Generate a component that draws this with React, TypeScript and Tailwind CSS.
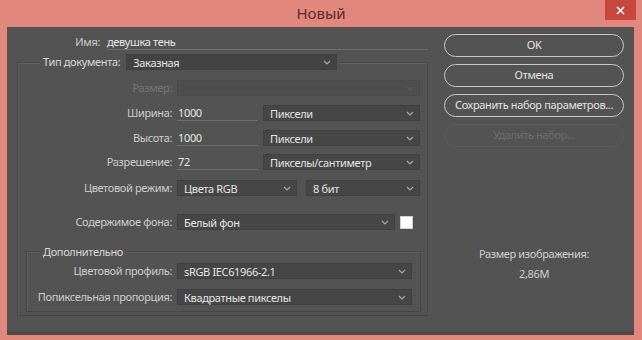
import React from "react";

const font = { fontFamily: '"Noto Sans", "Open Sans", sans-serif' };

function Chevron() {
  return (
    <svg width="8" height="5" viewBox="0 0 8 5" className="shrink-0">
      <path d="M1 1 L4 4 L7 1" fill="none" stroke="#a8a8a8" strokeWidth="1.2" />
    </svg>
  );
}

function Select({ text, className, disabled }: { text: string; className: string; disabled?: boolean }) {
  return (
    <div
      className={
        "flex items-center justify-between pl-[6px] pr-[5px] h-[16px] border " +
        (disabled ? "bg-[#4e4e4e] border-[#4a4a4a] " : "bg-[#464646] border-[#404040] ") +
        className
      }
    >
      <span className="text-[#e4e4e4] leading-none whitespace-nowrap">{text}</span>
      {disabled ? (
        <svg width="8" height="5" viewBox="0 0 8 5">
          <path d="M1 1 L4 4 L7 1" fill="none" stroke="#5c5c5c" strokeWidth="1.2" />
        </svg>
      ) : (
        <Chevron />
      )}
    </div>
  );
}

function Input({ text, className }: { text: string; className: string }) {
  return (
    <div className={"h-[16px] flex items-center border-b border-[#6c6c6c] pl-[1px] " + className}>
      <span className="text-[#e6e6e6] leading-none">{text}</span>
    </div>
  );
}

function Row({ label, children, labelW, className, disabled }: { label: string; children: React.ReactNode; labelW: string; className: string; disabled?: boolean }) {
  return (
    <div className={"flex items-center h-[17px] " + className}>
      <div className={"text-right shrink-0 pr-[5px] whitespace-nowrap " + labelW + (disabled ? " text-[#767676]" : " text-[#cdcdcd]")}>
        {label}
      </div>
      {children}
    </div>
  );
}

function Btn({ text, disabled, className }: { text: string; disabled?: boolean; className?: string }) {
  return (
    <div
      className={
        "w-[180px] h-[23px] rounded-full flex items-center justify-center border-[1.5px] " +
        (disabled ? "border-[#5c5c5c] text-[#6e6e6e] " : "border-[#c9c9c9] text-[#e2e2e2] ") +
        (className || "")
      }
    >
      {text}
    </div>
  );
}

export default function App() {
  return (
    <div className="w-[642px] h-[340px] bg-[#e2877d] flex flex-col text-[11px] tracking-[-0.35px]" style={font}>
      <div className="relative h-[27px] flex items-center justify-center shrink-0">
        <span className="text-[15px] text-[#5a2c29] tracking-normal">Новый</span>
        <div className="absolute right-[6px] top-0 w-[31px] h-[20px] bg-[#c7473f] flex items-center justify-center">
          <svg width="9" height="9" viewBox="0 0 9 9">
            <path d="M1 1 L8 8 M8 1 L1 8" stroke="#fff" strokeWidth="1.6" />
          </svg>
        </div>
      </div>
      <div className="ml-[7px] mr-[8px] mb-[5px] flex-1 bg-[#535353] border-b-[4px] border-[#4b4b4b] flex">
        {/* left column */}
        <div className="w-[425px] flex flex-col">
          <div className="flex items-center h-[16px] mt-[7px]">
            <div className="w-[100px] text-right pr-[7px] text-[#cdcdcd]">Имя:</div>
            <Input text="девушка тень" className="w-[321px] !pl-[0px]" />
          </div>
          <fieldset className="ml-[10px] w-[411px] mt-[4px] border border-[#474747] shadow-[inset_1px_1px_0_#606060] pb-[3px]">
            <legend className="ml-[22px] px-[3px] bg-[#535353] flex items-center">
              <span className="text-[#d8d8d8] mr-[6px]">Тип документа:</span>
              <Select text="Заказная" className="w-[211px] !bg-[#434343]" />
            </legend>
            <div className="flex flex-col">
              <Row label="Размер:" labelW="w-[159px]" className="mt-[9px]" disabled>
                <Select text="" className="w-[243px]" disabled />
              </Row>
              <Row label="Ширина:" labelW="w-[159px]" className="mt-[8px]">
                <Input text="1000" className="w-[81px]" />
                <Select text="Пиксели" className="w-[157px] ml-[5px]" />
              </Row>
              <Row label="Высота:" labelW="w-[159px]" className="mt-[8px]">
                <Input text="1000" className="w-[81px]" />
                <Select text="Пиксели" className="w-[157px] ml-[5px]" />
              </Row>
              <Row label="Разрешение:" labelW="w-[159px]" className="mt-[7px]">
                <Input text="72" className="w-[81px]" />
                <Select text="Пикселы/сантиметр" className="w-[157px] ml-[5px]" />
              </Row>
              <Row label="Цветовой режим:" labelW="w-[159px]" className="mt-[9px]">
                <Select text="Цвета RGB" className="w-[120px]" />
                <Select text="8 бит" className="w-[114px] ml-[9px]" />
              </Row>
              <Row label="Содержимое фона:" labelW="w-[159px]" className="mt-[17px]">
                <Select text="Белый фон" className="w-[218px]" />
                <div className="w-[13px] h-[13px] bg-white ml-[5px] border border-[#d0d0d0]" />
              </Row>
              <fieldset className="ml-[8px] w-[395px] mt-[14px] border border-[#474747] shadow-[inset_1px_1px_0_#606060] pb-[5px]">
                <legend className="ml-[12px] px-[4px] bg-[#535353] text-[#d8d8d8] leading-[14px]">
                  Дополнительно
                </legend>
                <Row label="Цветовой профиль:" labelW="w-[150px]" className="mt-[4px]">
                  <Select text="sRGB IEC61966-2.1" className="w-[235px]" />
                </Row>
                <Row label="Попиксельная пропорция:" labelW="w-[150px]" className="mt-[9px]">
                  <Select text="Квадратные пикселы" className="w-[235px]" />
                </Row>
              </fieldset>
            </div>
          </fieldset>
        </div>
        {/* right column */}
        <div className="flex-1 flex flex-col items-center pl-[2px]">
          <div className="flex flex-col gap-[7px] mt-[7px]">
            <Btn text="OK" />
            <Btn text="Отмена" />
            <Btn text="Сохранить набор параметров..." />
            <Btn text="Удалить набор..." disabled />
          </div>
          <div className="mt-[97px] text-[#cfcfcf] text-center leading-[20px]">
            <div>Размер изображения:</div>
            <div>2,86M</div>
          </div>
        </div>
      </div>
    </div>
  );
}
